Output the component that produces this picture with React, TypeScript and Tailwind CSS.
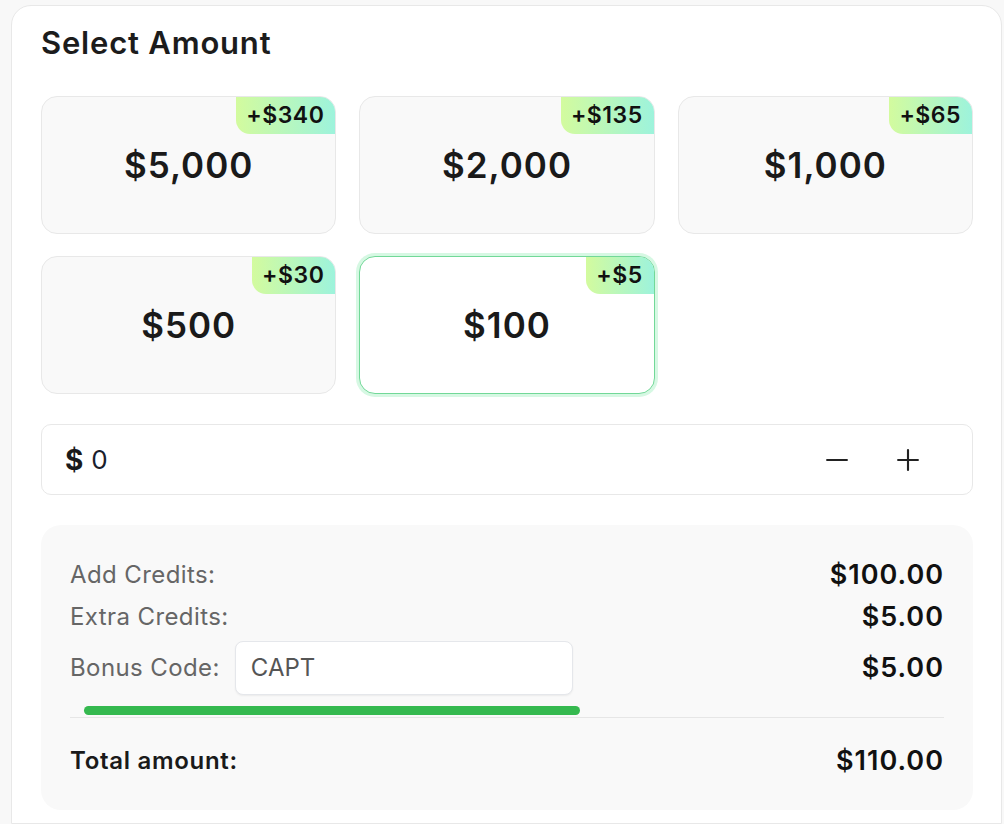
import React from "react";
import { Minus, Plus } from "lucide-react";

const amounts = [
  { v: "$5,000", b: "+$340", sel: false },
  { v: "$2,000", b: "+$135", sel: false },
  { v: "$1,000", b: "+$65", sel: false },
  { v: "$500", b: "+$30", sel: false },
  { v: "$100", b: "+$5", sel: true },
];

export default function App() {
  return (
    <div className="min-h-screen bg-[#f8f8f8] pl-[11px] pt-[5px] font-['Inter',sans-serif]">
      <div className="w-[991px] h-[819px] bg-white border border-[#e8e8e8] rounded-t-[20px] pl-[29px] pr-[28px] pt-[20px]">
        <h2 className="text-[31px] leading-[34px] font-semibold text-[#1c1c1c] tracking-[0.8px]">Select Amount</h2>

        <div className="mt-[36px] grid grid-cols-3 gap-x-[23px] gap-y-[22px]">
          {amounts.map((a) => (
            <div
              key={a.v}
              className={
                a.sel
                  ? "relative h-[138px] rounded-[16px] bg-white border border-[#72d898] shadow-[0_0_0_3px_#d6f8e3] overflow-hidden flex items-center justify-center"
                  : "relative h-[138px] rounded-[16px] bg-[#f9f9f9] border border-[#e8e8e8] overflow-hidden flex items-center justify-center"
              }
            >
              <div className="absolute top-0 right-0 h-[37px] pl-[10px] pr-[11px] rounded-bl-[14px] bg-[linear-gradient(90deg,#d3fb9e,#9df3dc)] flex items-center">
                <span className="text-[23px] font-semibold text-[#111] leading-none tracking-[0.5px]">{a.b}</span>
              </div>
              <span className="text-[35px] font-semibold text-[#1a1a1a] leading-none tracking-[1px]">
                {a.v}
              </span>
            </div>
          ))}
        </div>

        <div className="mt-[30px] h-[71px] rounded-[10px] border border-[#e8e8e8] flex items-center pl-[23px] pr-[47px]">
          <span className="text-[28px] font-bold text-[#1a1a1a]">$</span>
          <span className="ml-[8px] text-[26px] text-[#1a202c]">0</span>
          <div className="ml-auto flex items-center gap-[37px]">
            <Minus size={34} strokeWidth={1.5} className="text-[#222]" />
            <Plus size={34} strokeWidth={1.5} className="text-[#222]" />
          </div>
        </div>

        <div className="mt-[30px] h-[285px] rounded-[20px] bg-[#f9f9f9] pl-[29px] pr-[29px] pt-[29px]">
          <div className="h-[42px] flex items-center justify-between">
            <span className="text-[24px] text-[#666] tracking-[0.4px]">Add Credits:</span>
            <span className="text-[27px] font-semibold text-[#111] tracking-[1px]">$100.00</span>
          </div>
          <div className="h-[42px] flex items-center justify-between">
            <span className="text-[24px] text-[#666] tracking-[0.4px]">Extra Credits:</span>
            <span className="text-[27px] font-semibold text-[#111] tracking-[1px]">$5.00</span>
          </div>
          <div className="mt-[3px] h-[54px] flex items-center justify-between">
            <div className="flex items-center">
              <span className="text-[24px] text-[#666] tracking-[0.4px]">Bonus Code:</span>
              <div className="ml-[15px] w-[338px] h-[54px] bg-white border border-[#e5e7eb] rounded-[8px] shadow-[0_1px_2px_rgba(0,0,0,0.06)] flex items-center pl-[15px]">
                <span className="text-[24px] text-[#555]">CAPT</span>
              </div>
            </div>
            <span className="text-[27px] font-semibold text-[#111] tracking-[1px]">$5.00</span>
          </div>
          <div className="mt-[11px] ml-[14px] w-[496px] h-[9px] rounded-full bg-[#35b94f]" />
          <div className="mt-[2px] h-px bg-[#e6e6e6]" />
          <div className="mt-[27px] h-[32px] flex items-center justify-between">
            <span className="text-[24px] font-semibold text-[#1a1a1a] tracking-[0.7px]">Total amount:</span>
            <span className="text-[27px] font-semibold text-[#111] tracking-[1px]">$110.00</span>
          </div>
        </div>
      </div>
    </div>
  );
}
